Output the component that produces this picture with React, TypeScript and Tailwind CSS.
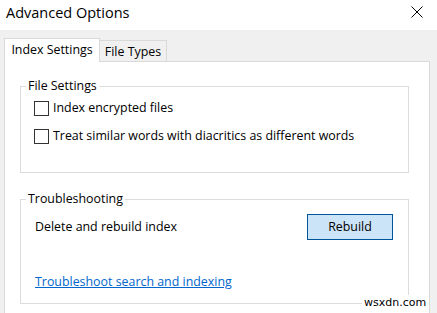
export default function App() {
  return (
    <div className="relative w-[437px] h-[313px] overflow-hidden bg-[#f0f0f0] text-[12.4px] text-black font-['Open_Sans',sans-serif]">
      {/* title bar */}
      <div className="h-[30px] bg-white flex items-center justify-between pl-[6px] pr-[14px]">
        <span className="text-[14.5px] leading-[20px] -mt-[4px]">Advanced Options</span>
        <svg width="12" height="12" viewBox="0 0 12 12" className="-mt-[7px]">
          <path d="M0.5 0.5 L11.5 11.5 M11.5 0.5 L0.5 11.5" stroke="#000" strokeWidth="1" />
        </svg>
      </div>

      <div className="pt-[8px] pl-[4px]">
        {/* tabs */}
        <div className="flex items-end h-[23px]">
          <div className="relative z-10 -mb-px w-[96px] h-[24px] bg-white border border-b-0 border-[#d9d9d9] flex items-center justify-center leading-[16px] pb-px">
            Index Settings
          </div>
          <div className="w-[67px] h-[21px] border border-l-0 border-b-0 border-[#d9d9d9] flex items-center justify-center leading-[16px] pt-[2px]">
            File Types
          </div>
        </div>

        {/* tab panel */}
        <div className="w-[426px] h-[260px] bg-white border border-[#d9d9d9] pl-[15px]">
          {/* File Settings */}
          <div className="mt-[24px] w-[389px] h-[87px] border border-[#dcdcdc]">
            <span className="block w-fit -mt-[9px] ml-[5px] px-[2px] bg-white leading-[16px]">File Settings</span>
            <div className="pl-[13px]">
              <label className="mt-[6px] h-[16px] flex items-center gap-[4px]">
                <span className="w-[15px] h-[15px] border border-[#333] bg-white" />
                <span className="leading-[16px]">Index encrypted files</span>
              </label>
              <label className="mt-[12px] h-[16px] flex items-center gap-[4px]">
                <span className="w-[15px] h-[15px] border border-[#333] bg-white" />
                <span className="leading-[16px]">Treat similar words with diacritics as different words</span>
              </label>
            </div>
          </div>

          {/* Troubleshooting */}
          <div className="mt-[26px] w-[389px] h-[105px] border border-[#dcdcdc]">
            <span className="block w-fit -mt-[9px] ml-[5px] px-[2px] bg-white leading-[16px]">Troubleshooting</span>
            <div className="pl-[14px] pr-[15px]">
              <div className="mt-[7px] flex items-center justify-between">
                <span className="leading-[16px]">Delete and rebuild index</span>
                <button className="w-[86px] h-[26px] bg-[#cce4f7] border border-[#005499] leading-[16px]">
                  Rebuild
                </button>
              </div>
              <a className="mt-[34px] block w-fit leading-[16px] text-[#0066cc] underline">
                Troubleshoot search and indexing
              </a>
            </div>
          </div>
        </div>
      </div>

      <span className="absolute left-[362px] top-[295px] bg-white px-[2px] text-[11px] leading-[16px] font-['DejaVu_Sans',sans-serif] text-black">
        wsxdn.com
      </span>
    </div>
  );
}
